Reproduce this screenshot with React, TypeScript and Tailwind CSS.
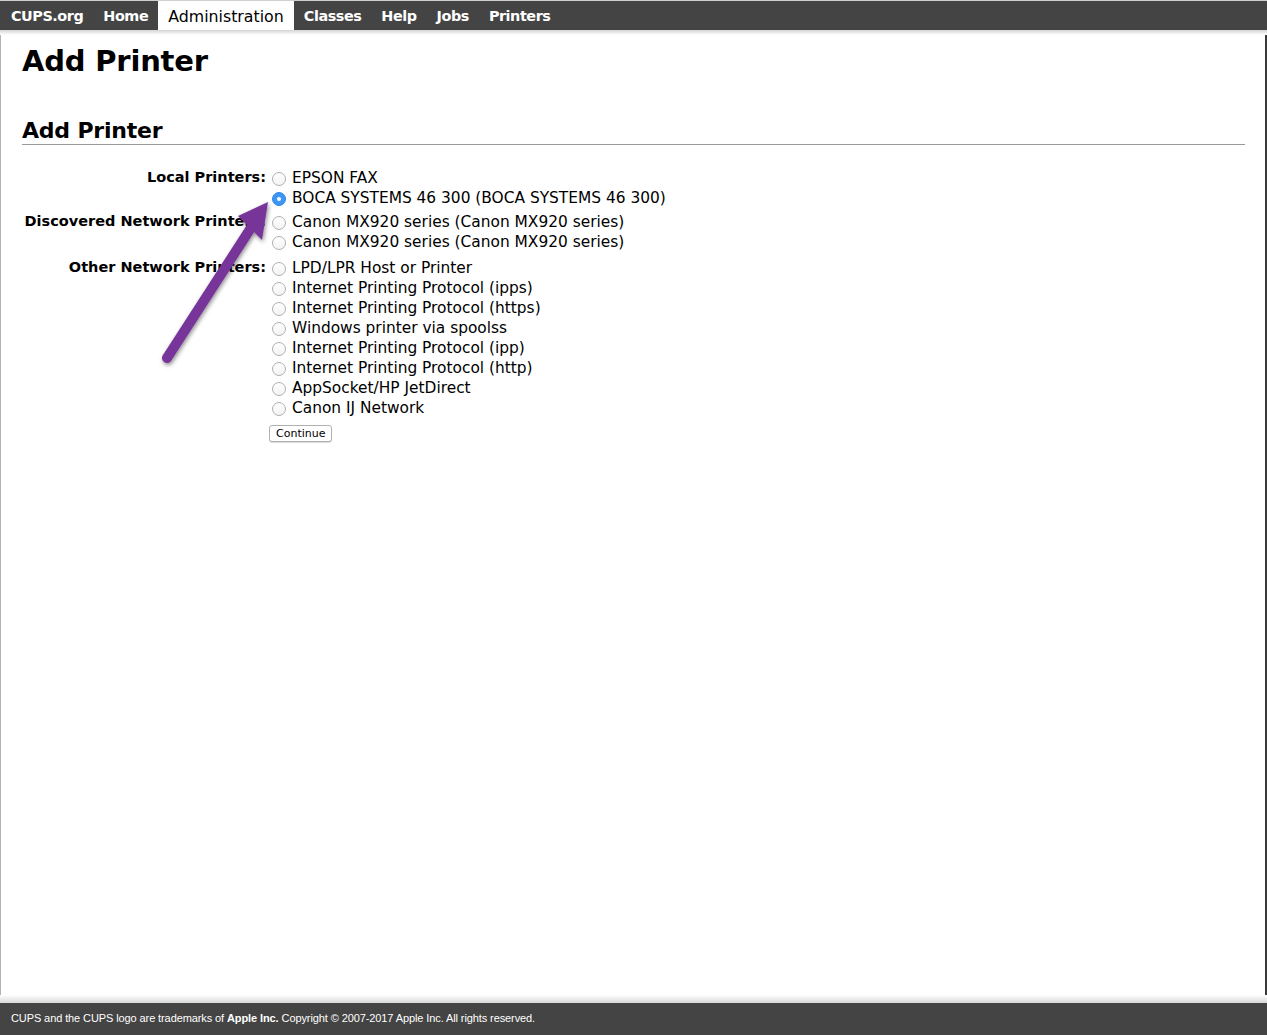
import React from "react";

const NAV = [
  { label: "CUPS.org", active: false },
  { label: "Home", active: false },
  { label: "Administration", active: true },
  { label: "Classes", active: false },
  { label: "Help", active: false },
  { label: "Jobs", active: false },
  { label: "Printers", active: false },
];

const GROUPS = [
  {
    label: "Local Printers:",
    items: ["EPSON FAX", "BOCA SYSTEMS 46 300 (BOCA SYSTEMS 46 300)"],
    mt: "mt-0",
  },
  {
    label: "Discovered Network Printers:",
    items: ["Canon MX920 series (Canon MX920 series)", "Canon MX920 series (Canon MX920 series)"],
    mt: "mt-[4px]",
  },
  {
    label: "Other Network Printers:",
    items: [
      "LPD/LPR Host or Printer",
      "Internet Printing Protocol (ipps)",
      "Internet Printing Protocol (https)",
      "Windows printer via spoolss",
      "Internet Printing Protocol (ipp)",
      "Internet Printing Protocol (http)",
      "AppSocket/HP JetDirect",
      "Canon IJ Network",
    ],
    mt: "mt-[6px]",
  },
];

const SELECTED = "BOCA SYSTEMS 46 300 (BOCA SYSTEMS 46 300)";

function Radio({ checked }: { checked: boolean }) {
  if (checked) {
    return (
      <span className="w-[14px] h-[14px] rounded-full bg-[#3d96f5] border border-[#2f86e6] flex items-center justify-center shrink-0">
        <span className="block w-[4px] h-[4px] rounded-full bg-white" />
      </span>
    );
  }
  return (
    <span className="block w-[14px] h-[14px] rounded-full bg-gradient-to-b from-white to-[#f3f3f3] border border-[#b0b0b0] shrink-0" />
  );
}

function Arrow() {
  return (
    <svg
      className="absolute left-[150px] top-[190px] pointer-events-none"
      width="140"
      height="190"
      viewBox="0 0 140 190"
    >
      <defs>
        <filter id="sh" x="-30%" y="-30%" width="160%" height="160%">
          <feDropShadow dx="1" dy="2" stdDeviation="2" floodColor="#000" floodOpacity="0.45" />
        </filter>
      </defs>
      <g filter="url(#sh)">
        <line x1="17" y1="168" x2="106" y2="30" stroke="#77359a" strokeWidth="10" strokeLinecap="round" />
        <polygon points="118,12 88,26 112,50" fill="#77359a" />
      </g>
    </svg>
  );
}

export default function App() {
  return (
    <div
      className="relative w-[1267px] h-[1035px] bg-white flex flex-col overflow-hidden text-black"
      style={{ fontFamily: '"DejaVu Sans", "Noto Sans", sans-serif' }}
    >
      {/* top nav */}
      <div className="h-[1px] bg-[#cfcfcf]" />
      <nav className="h-[29px] bg-[#444444] flex items-stretch pl-[1px]">
        {NAV.map((n) => (
          <div
            key={n.label}
            className={`px-[10px] pt-[2px] flex items-center ${
              n.active
                ? "bg-white text-black font-normal text-[15.8px]"
                : "text-white font-bold text-[14.4px] tracking-[-0.45px]"
            }`}
          >
            {n.label}
          </div>
        ))}
      </nav>
      <div className="h-[5px] bg-gradient-to-b from-[#d4d4d4] to-white" />

      <main className="flex-1 border-l border-[#b4b4b4] border-r-[2px] border-r-[#3a3a3a] pl-[21px] pr-[20px]">
        <h1 className="text-[29px] font-bold leading-[40px] mt-[6px] tracking-[-0.2px]">Add Printer</h1>
        <h2 className="text-[22px] font-bold leading-[30px] mt-[35px] tracking-[-0.2px]">Add Printer</h2>
        <div className="h-[1px] bg-[#999999] mt-[-2px]" />

        <div className="mt-[23px] flex flex-col">
          {GROUPS.map((g) => (
            <div key={g.label} className={`flex ${g.mt}`}>
              <div className="w-[245px] shrink-0 text-right text-[14.5px] font-bold leading-[18px] pr-[1px] whitespace-nowrap">
                {g.label}
              </div>
              <div className="flex flex-col">
                {g.items.map((it, i) => (
                  <div key={i} className="flex items-center h-[20px] gap-[6px] pl-[5px]">
                    <span className="block mt-[2px]">
                      <Radio checked={it === SELECTED} />
                    </span>
                    <span className="text-[15.4px] leading-[20px] whitespace-nowrap">{it}</span>
                  </div>
                ))}
              </div>
            </div>
          ))}
          <div className="pl-[247px] mt-[2px]">
            <button className="h-[17px] px-[6px] text-[11px] leading-[15px] border border-[#b0b0b0] rounded-[3px] bg-white shadow-[0_1px_0_#ddd]">
              Continue
            </button>
          </div>
        </div>
      </main>

      {/* footer */}
      <div className="h-[8px] bg-gradient-to-b from-white to-[#d8d8d8]" />
      <footer
        className="h-[32px] bg-[#444444] text-white text-[11px] flex items-center pl-[11px] pb-[1px] tracking-[-0.1px]"
        style={{ fontFamily: '"Liberation Sans", Arial, sans-serif' }}
      >
        CUPS and the CUPS logo are trademarks of&nbsp;<span className="font-bold">Apple Inc.</span>&nbsp;Copyright © 2007-2017 Apple Inc. All rights reserved.
      </footer>

      <Arrow />
    </div>
  );
}
